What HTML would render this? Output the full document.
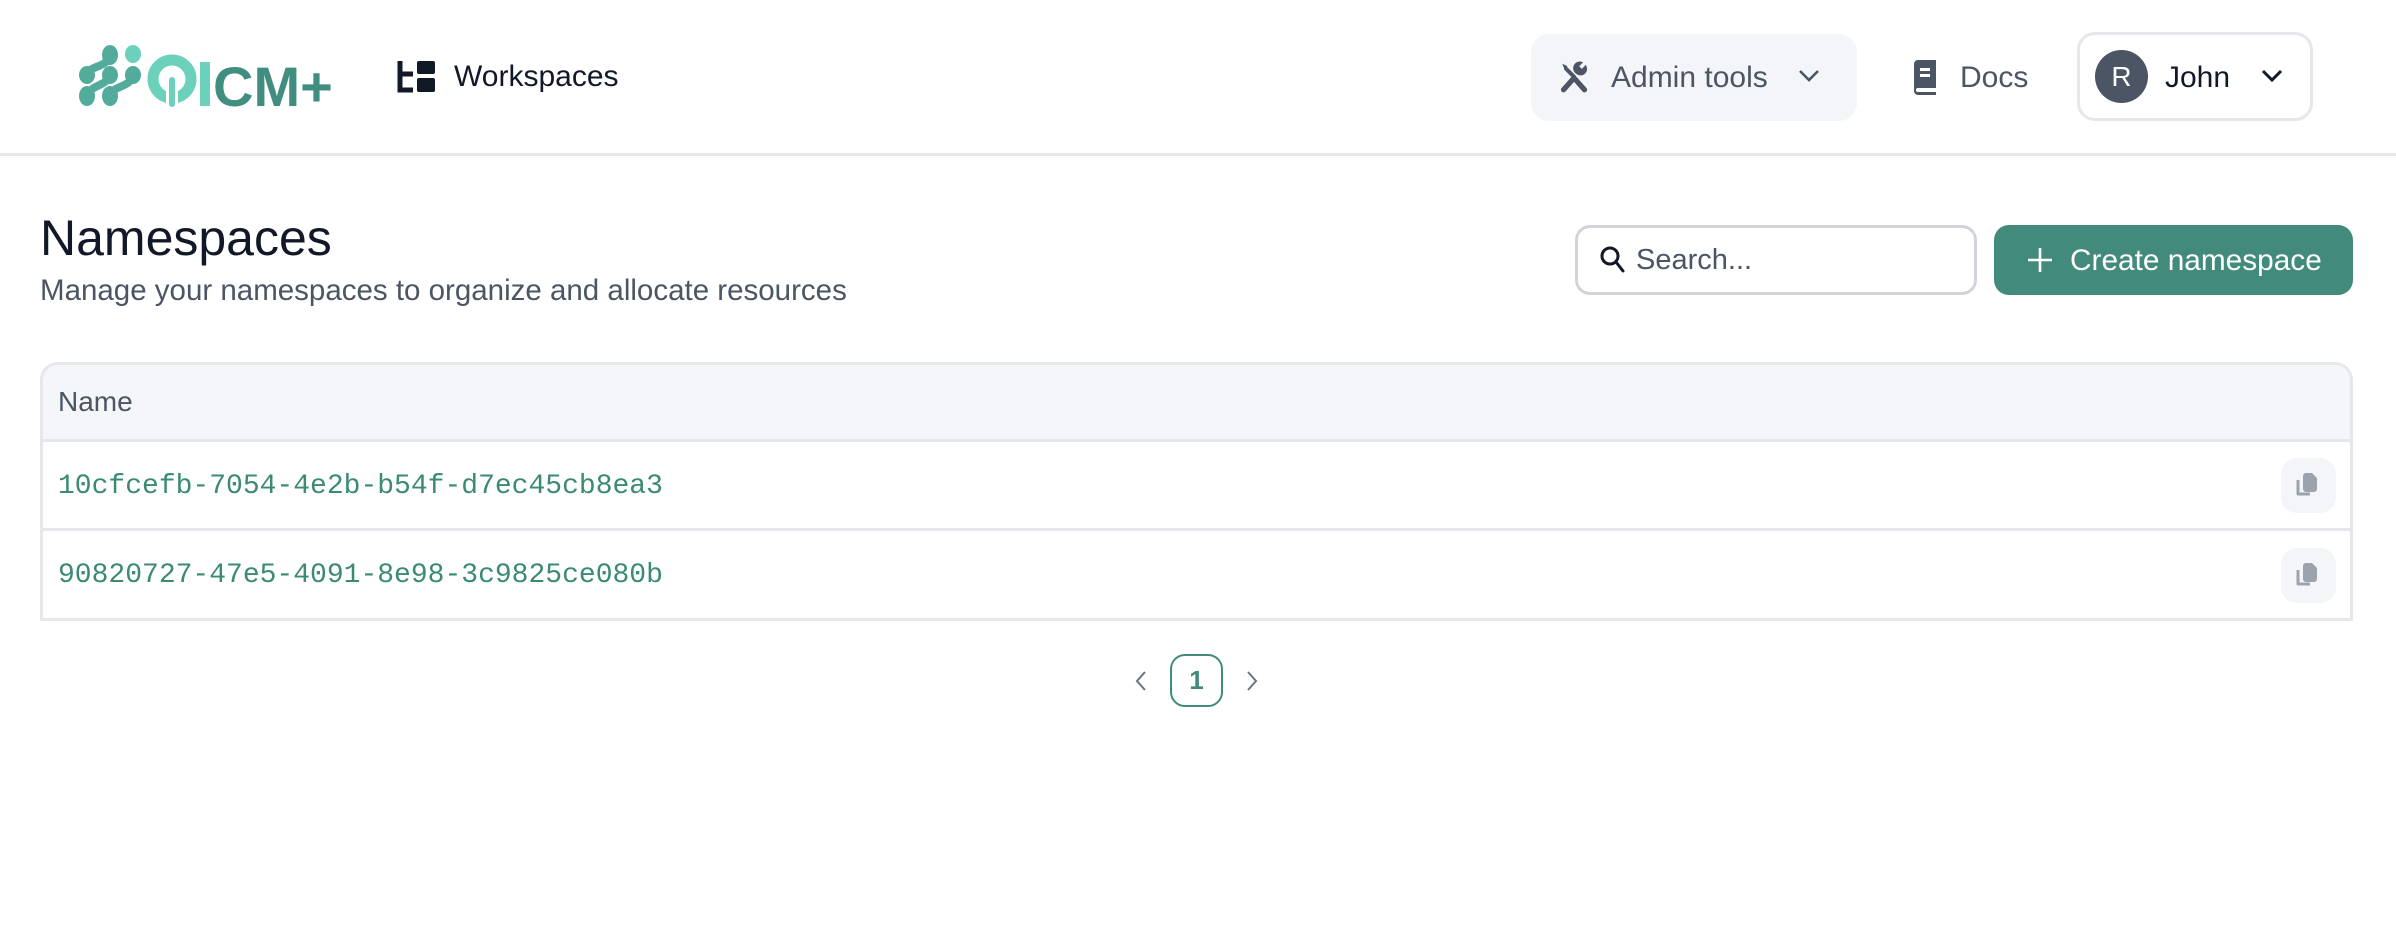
<!DOCTYPE html>
<html><head><meta charset="utf-8"><style>
*{box-sizing:border-box;margin:0;padding:0}
body{width:2396px;height:932px;background:#fff;font-family:"Liberation Sans",sans-serif;position:relative;overflow:hidden;color:#111827}
.abs{position:absolute}
.hdr{left:0;top:0;width:2396px;height:156px;border-bottom:3px solid #e5e7eb}
.t{white-space:nowrap;line-height:1}
</style></head><body>
<div class="abs hdr"></div>

<svg class="abs" style="left:76px;top:44px" width="270" height="66" viewBox="0 0 270 66">
 <g fill="#52ab9b" stroke="#52ab9b" stroke-width="8" stroke-linecap="round">
  <path d="M34 11 C30 25 15 20 11 31" fill="none"/>
  <path d="M57 31 C53 45 38 40 34 52" fill="none"/>
  <path d="M34 31 C30 43 15 40 11 52" fill="none"/>
 </g>
 <g fill="#52ab9b">
  <ellipse cx="34" cy="11" rx="8" ry="10"/>
  <ellipse cx="11" cy="31" rx="8" ry="9"/>
  <ellipse cx="34" cy="31" rx="8" ry="9"/>
  <ellipse cx="57" cy="31" rx="8" ry="9"/>
  <ellipse cx="11" cy="52" rx="8" ry="10"/>
  <ellipse cx="34" cy="52" rx="8" ry="10"/>
 </g>
 <ellipse cx="57" cy="10" rx="8" ry="9" fill="#6bd1bb"/>
 <circle cx="96" cy="35" r="19" fill="none" stroke="#6bd1bb" stroke-width="11"/>
 <rect x="90" y="33" width="12" height="30" fill="#fff"/>
 <rect x="93" y="33" width="6" height="30" rx="3" fill="#6bd1bb"/>
 <rect x="124" y="18" width="10" height="44" fill="#6bd1bb"/>
 <text x="137" y="62" font-family="Liberation Sans" font-weight="bold" font-size="56" fill="#418e80">CM+</text>
</svg>

<svg class="abs" style="left:397px;top:61px" width="40" height="32" viewBox="0 0 40 32">
 <path d="M3 0 V29 H16 M3 13 H16" stroke="#111827" stroke-width="5" fill="none"/>
 <rect x="20" y="0" width="18" height="13" rx="2" fill="#111827"/>
 <rect x="20" y="17" width="18" height="14" rx="2" fill="#111827"/>
</svg>
<div class="abs t" style="left:454px;top:62px;font-size:30px;color:#111827">Workspaces</div>

<div class="abs" style="left:1531px;top:34px;width:326px;height:87px;background:#f4f5f9;border-radius:18px"></div>
<svg class="abs" style="left:1558px;top:61px" width="32" height="34" viewBox="0 0 24 26">
 <path d="M4 22 L12 13" stroke="#4b5563" stroke-width="4" stroke-linecap="round"/>
 <path d="M13 14 L20 22" stroke="#4b5563" stroke-width="4" stroke-linecap="round"/>
 <path d="M12 12 L6 6" stroke="#4b5563" stroke-width="3" stroke-linecap="round"/>
 <path d="M3 2 L7 4 L5 7 Z" fill="#4b5563"/>
 <path d="M14 10 a5 5 0 0 0 7-7 l-3 3 -2-2 3-3 a5 5 0 0 0-5 9z" fill="#4b5563"/>
</svg>
<div class="abs t" style="left:1611px;top:63px;font-size:30px;color:#4b5563">Admin tools</div>
<svg class="abs" style="left:1797px;top:68px" width="24" height="16" viewBox="0 0 24 16"><path d="M3 3 L12 12 L21 3" stroke="#4b5563" stroke-width="2.6" fill="none"/></svg>

<svg class="abs" style="left:1910px;top:60px" width="30" height="36" viewBox="0 0 30 36">
 <path d="M4 4 a4 4 0 0 1 4-4 H26 V28 H8 a2 2 0 0 0 0 4 H26 V35 H8 a4 4 0 0 1-4-4 Z" fill="#4b5563"/>
 <rect x="10" y="8" width="10" height="3" fill="#fff"/><rect x="10" y="14" width="10" height="3" fill="#fff"/>
</svg>
<div class="abs t" style="left:1960px;top:63px;font-size:30px;color:#4b5563">Docs</div>

<div class="abs" style="left:2077px;top:32px;width:236px;height:89px;border:3px solid #e5e7eb;border-radius:18px"></div>
<div class="abs t" style="left:2095px;top:50px;width:53px;height:53px;border-radius:50%;background:#4b5563;color:#fff;font-size:28px;text-align:center;line-height:53px">R</div>
<div class="abs t" style="left:2165px;top:63px;font-size:30px;color:#111827">John</div>
<svg class="abs" style="left:2260px;top:68px" width="24" height="16" viewBox="0 0 24 16"><path d="M3 3 L12 12 L21 3" stroke="#111827" stroke-width="3" fill="none"/></svg>

<div class="abs t" style="left:40px;top:213px;font-size:50px;color:#111827">Namespaces</div>
<div class="abs t" style="left:40px;top:276px;font-size:29.5px;color:#4b5563">Manage your namespaces to organize and allocate resources</div>

<div class="abs" style="left:1575px;top:225px;width:402px;height:70px;border:3px solid #d1d5db;border-radius:15px"></div>
<svg class="abs" style="left:1600px;top:246px" width="26" height="28" viewBox="0 0 26 28"><circle cx="10" cy="10" r="8" stroke="#111827" stroke-width="3" fill="none"/><path d="M16 16 L23 25" stroke="#111827" stroke-width="3" stroke-linecap="round"/></svg>
<div class="abs t" style="left:1636px;top:246px;font-size:29px;color:#4b5563">Search...</div>

<div class="abs" style="left:1994px;top:225px;width:359px;height:70px;background:#428a7c;border-radius:15px"></div>
<svg class="abs" style="left:2027px;top:247px" width="26" height="26" viewBox="0 0 26 26"><path d="M13 1 V25 M1 13 H25" stroke="#fff" stroke-width="2.6"/></svg>
<div class="abs t" style="left:2070px;top:246px;font-size:29.8px;color:#fff">Create namespace</div>

<div class="abs" style="left:40px;top:362px;width:2313px;height:259px;border:3px solid #e5e7eb;border-radius:18px 18px 0 0;overflow:hidden">
 <div style="height:77px;background:#f5f6f9;border-bottom:3px solid #e5e7eb"></div>
 <div style="height:89px;border-bottom:3px solid #e5e7eb"></div>
</div>
<div class="abs t" style="left:58px;top:388px;font-size:28px;color:#4b5563">Name</div>
<div class="abs t" style="left:58px;top:473px;font-size:28px;color:#3a8a74;font-family:'Liberation Mono',monospace">10cfcefb-7054-4e2b-b54f-d7ec45cb8ea3</div>
<div class="abs t" style="left:58px;top:562px;font-size:28px;color:#3a8a74;font-family:'Liberation Mono',monospace">90820727-47e5-4091-8e98-3c9825ce080b</div>

<div class="abs" style="left:2281px;top:458px;width:55px;height:55px;background:#f4f5f9;border-radius:16px"></div>
<div class="abs" style="left:2281px;top:548px;width:55px;height:55px;background:#f4f5f9;border-radius:16px"></div>
<svg class="abs" style="left:2295px;top:472px" width="26" height="26" viewBox="0 0 26 26"><path d="M3 8 V22 H15" stroke="#9ca3af" stroke-width="3" fill="none" stroke-linejoin="round"/><path d="M8 4 a3 3 0 0 1 3-3 H17 L22 6 V17 a3 3 0 0 1-3 3 H11 a3 3 0 0 1-3-3 Z" fill="#9ca3af"/></svg>
<svg class="abs" style="left:2295px;top:562px" width="26" height="26" viewBox="0 0 26 26"><path d="M3 8 V22 H15" stroke="#9ca3af" stroke-width="3" fill="none" stroke-linejoin="round"/><path d="M8 4 a3 3 0 0 1 3-3 H17 L22 6 V17 a3 3 0 0 1-3 3 H11 a3 3 0 0 1-3-3 Z" fill="#9ca3af"/></svg>

<svg class="abs" style="left:1133px;top:670px" width="16" height="22" viewBox="0 0 16 22"><path d="M12 2 L4 11 L12 20" stroke="#6b7280" stroke-width="2" fill="none"/></svg>
<div class="abs t" style="left:1170px;top:654px;width:53px;height:53px;border:2px solid #428a7c;border-radius:15px;text-align:center;line-height:49px;font-size:26px;font-weight:bold;color:#428a7c">1</div>
<svg class="abs" style="left:1244px;top:670px" width="16" height="22" viewBox="0 0 16 22"><path d="M4 2 L12 11 L4 20" stroke="#6b7280" stroke-width="2" fill="none"/></svg>
</body></html>
